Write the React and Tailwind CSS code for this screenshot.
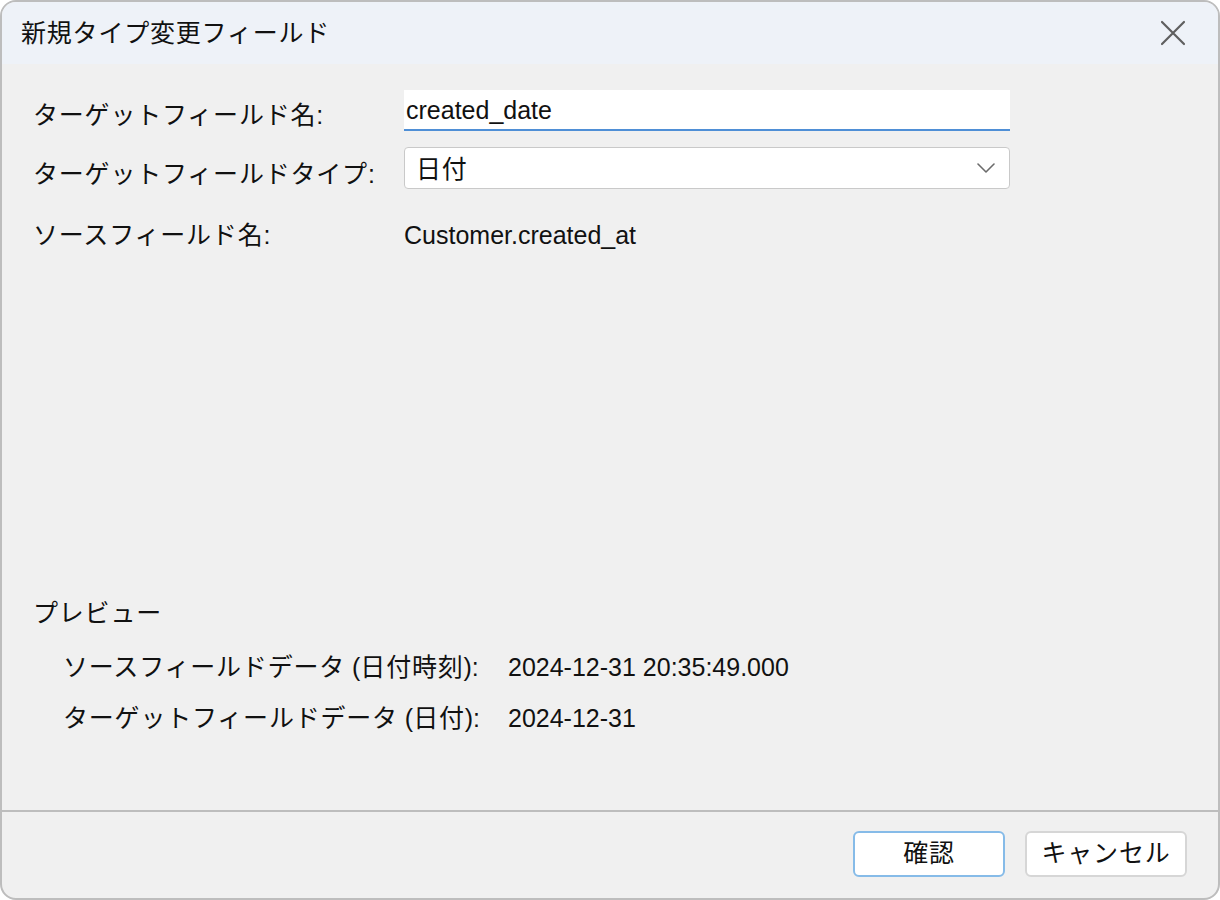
import React from 'react';

const font = { fontFamily: '"Liberation Sans", "Noto Sans CJK JP", sans-serif' };

// Japanese runs are set a touch wider than the default CJK face
const Jp = ({ children }) => <span className="tracking-[0.8px]">{children}</span>;

const CloseIcon = () => (
  <svg width="26" height="26" viewBox="0 0 26 26" fill="none">
    <path d="M2 2 L24 24 M24 2 L2 24" stroke="#5f5f5f" strokeWidth="2.2" strokeLinecap="round" />
  </svg>
);

const Chevron = () => (
  <svg width="18" height="10" viewBox="0 0 18 10" fill="none">
    <path d="M1 1 L9 9 L17 1" stroke="#6b6b6b" strokeWidth="1.6" strokeLinecap="round" strokeLinejoin="round" />
  </svg>
);

export default function App() {
  return (
    <div className="w-[1220px] h-[900px] bg-white text-[25px] text-[#111]" style={font}>
      <div className="w-full h-full flex flex-col border-2 border-[#bdbdbd] rounded-[16px] overflow-hidden bg-[#f0f0f0]">
        {/* title bar */}
        <div className="h-[62px] shrink-0 bg-[#eef2f8] flex items-center justify-between pl-[19px] pr-[32px]">
          <span className="leading-none"><Jp>新規タイプ変更フィールド</Jp></span>
          <CloseIcon />
        </div>

        {/* form */}
        <div className="flex-1 flex flex-col px-[31px] pt-[26px]">
          <div className="grid grid-cols-[371px_606px] gap-y-[16px] items-center">
            <span className="leading-none pt-[10px]"><Jp>ターゲットフィールド名</Jp>:</span>
            <div className="h-[41px] bg-white border-b-2 border-[#4f8fd6] flex items-center pl-[2px] pt-[3px]">
              created_date
            </div>

            <span className="leading-none pt-[12px]"><Jp>ターゲットフィールドタイプ</Jp>:</span>
            <div className="h-[42px] bg-white border border-[#c9c9c9] rounded-[4px] flex items-center justify-between pl-[11px] pr-[14px]">
              <span className="pt-[3px]"><Jp>日付</Jp></span>
              <Chevron />
            </div>

            <span className="leading-none mt-[18px]"><Jp>ソースフィールド名</Jp>:</span>
            <span className="leading-none mt-[18px]">Customer.created_at</span>
          </div>

          <div className="flex-1" />

          {/* preview */}
          <div className="pb-[76px]">
            <div className="h-[30px] flex items-center"><Jp>プレビュー</Jp></div>
            <div className="pl-[30px] mt-[24px] grid grid-cols-[445px_1fr] gap-y-[21px]">
              <span className="h-[30px] flex items-center whitespace-pre"><Jp>ソースフィールドデータ</Jp> (<Jp>日付時刻</Jp>):</span>
              <span className="h-[30px] flex items-center">2024-12-31 20:35:49.000</span>
              <span className="h-[30px] flex items-center whitespace-pre"><Jp>ターゲットフィールドデータ</Jp> (<Jp>日付</Jp>):</span>
              <span className="h-[30px] flex items-center">2024-12-31</span>
            </div>
          </div>
        </div>

        {/* footer */}
        <div className="h-[88px] shrink-0 border-t-2 border-[#bdbdbd] flex justify-end items-start gap-[20px] pt-[19px] pr-[31px]">
          <button className="w-[152px] h-[46px] bg-white border-2 border-[#86bbe8] rounded-[6px] flex items-center justify-center">
            <Jp>確認</Jp>
          </button>
          <button className="w-[162px] h-[46px] bg-white border-2 border-[#d6d6d6] rounded-[6px] flex items-center justify-center">
            <Jp>キャンセル</Jp>
          </button>
        </div>
      </div>
    </div>
  );
}
